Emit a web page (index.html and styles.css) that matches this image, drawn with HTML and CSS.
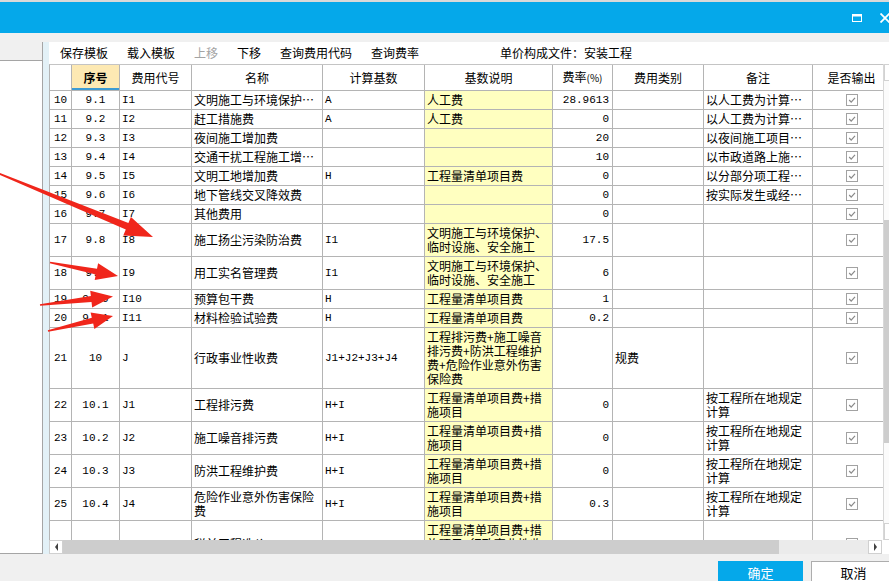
FILE: index.html
```html
<!DOCTYPE html>
<html lang="zh-CN">
<head>
<meta charset="utf-8">
<title>单价构成</title>
<link rel="stylesheet" href="styles.css">
</head>
<body>
<div class="topline"></div>
<div class="titlebar">
  <svg class="win-max" width="10" height="8" viewBox="0 0 10 8"><rect x="0.5" y="1" width="9" height="6.5" fill="none" stroke="#fff" stroke-width="1"/><rect x="0" y="0" width="10" height="2.5" fill="#fff"/></svg>
  <svg class="win-close" width="10" height="10" viewBox="0 0 10 10"><path d="M0.5 0.5 L9.5 9.5 M9.5 0.5 L0.5 9.5" stroke="#fff" stroke-width="1.8" fill="none"/></svg>
</div>
<div class="gap"></div>
<div class="main">
  <div class="leftpanel">
    <div class="lp-head"></div>
    <div class="lp-body"></div>
  </div>
  <div class="stripe"></div>
  <div class="content">
    <div class="toolbar">
      <span>保存模板</span>
      <span>载入模板</span>
      <span class="disabled">上移</span>
      <span>下移</span>
      <span>查询费用代码</span>
      <span>查询费率</span>
      <span class="file">单价构成文件：安装工程</span>
    </div>
    <div class="gridrow">
      <div class="gridclip">
        <table class="grid">
          <colgroup>
            <col class="w1"><col class="w2"><col class="w3"><col class="w4"><col class="w5"><col class="w6"><col class="w7"><col class="w8"><col class="w9"><col class="w10">
          </colgroup>
          <thead>
            <tr>
              <th></th>
              <th class="sorted">序号</th>
              <th>费用代号</th>
              <th>名称</th>
              <th>计算基数</th>
              <th>基数说明</th>
              <th>费率<span class="pct">(%)</span></th>
              <th>费用类别</th>
              <th>备注</th>
              <th>是否输出</th>
            </tr>
          </thead>
          <tbody>
            <tr><td class="mono num">10</td><td class="mono c">9.1</td><td class="mono">I1</td><td class="nw">文明施工与环境保护…</td><td class="mono">A</td><td class="yl">人工费</td><td class="mono r">28.9613</td><td></td><td class="nw">以人工费为计算…</td><td><span class="cb"><svg viewBox="0 0 10 10"><path d="M2.2 5 L4.2 7.2 L8 2.8"/></svg></span></td></tr>
            <tr><td class="mono num">11</td><td class="mono c">9.2</td><td class="mono">I2</td><td>赶工措施费</td><td class="mono">A</td><td class="yl">人工费</td><td class="mono r">0</td><td></td><td class="nw">以人工费为计算…</td><td><span class="cb"><svg viewBox="0 0 10 10"><path d="M2.2 5 L4.2 7.2 L8 2.8"/></svg></span></td></tr>
            <tr><td class="mono num">12</td><td class="mono c">9.3</td><td class="mono">I3</td><td>夜间施工增加费</td><td class="mono"></td><td class="yl"></td><td class="mono r">20</td><td></td><td class="nw">以夜间施工项目…</td><td><span class="cb"><svg viewBox="0 0 10 10"><path d="M2.2 5 L4.2 7.2 L8 2.8"/></svg></span></td></tr>
            <tr><td class="mono num">13</td><td class="mono c">9.4</td><td class="mono">I4</td><td class="nw">交通干扰工程施工增…</td><td class="mono"></td><td class="yl"></td><td class="mono r">10</td><td></td><td class="nw">以市政道路上施…</td><td><span class="cb"><svg viewBox="0 0 10 10"><path d="M2.2 5 L4.2 7.2 L8 2.8"/></svg></span></td></tr>
            <tr><td class="mono num">14</td><td class="mono c">9.5</td><td class="mono">I5</td><td>文明工地增加费</td><td class="mono">H</td><td class="yl">工程量清单项目费</td><td class="mono r">0</td><td></td><td class="nw">以分部分项工程…</td><td><span class="cb"><svg viewBox="0 0 10 10"><path d="M2.2 5 L4.2 7.2 L8 2.8"/></svg></span></td></tr>
            <tr><td class="mono num">15</td><td class="mono c">9.6</td><td class="mono">I6</td><td>地下管线交叉降效费</td><td class="mono"></td><td class="yl"></td><td class="mono r">0</td><td></td><td class="nw">按实际发生或经…</td><td><span class="cb"><svg viewBox="0 0 10 10"><path d="M2.2 5 L4.2 7.2 L8 2.8"/></svg></span></td></tr>
            <tr><td class="mono num">16</td><td class="mono c">9.7</td><td class="mono">I7</td><td>其他费用</td><td class="mono"></td><td class="yl"></td><td class="mono r">0</td><td></td><td></td><td><span class="cb"><svg viewBox="0 0 10 10"><path d="M2.2 5 L4.2 7.2 L8 2.8"/></svg></span></td></tr>
            <tr><td class="mono num">17</td><td class="mono c">9.8</td><td class="mono">I8</td><td>施工扬尘污染防治费</td><td class="mono">I1</td><td class="yl">文明施工与环境保护、临时设施、安全施工</td><td class="mono r">17.5</td><td></td><td></td><td><span class="cb"><svg viewBox="0 0 10 10"><path d="M2.2 5 L4.2 7.2 L8 2.8"/></svg></span></td></tr>
            <tr><td class="mono num">18</td><td class="mono c">9.9</td><td class="mono">I9</td><td>用工实名管理费</td><td class="mono">I1</td><td class="yl">文明施工与环境保护、临时设施、安全施工</td><td class="mono r">6</td><td></td><td></td><td><span class="cb"><svg viewBox="0 0 10 10"><path d="M2.2 5 L4.2 7.2 L8 2.8"/></svg></span></td></tr>
            <tr><td class="mono num">19</td><td class="mono c">9.10</td><td class="mono">I10</td><td>预算包干费</td><td class="mono">H</td><td class="yl">工程量清单项目费</td><td class="mono r">1</td><td></td><td></td><td><span class="cb"><svg viewBox="0 0 10 10"><path d="M2.2 5 L4.2 7.2 L8 2.8"/></svg></span></td></tr>
            <tr><td class="mono num">20</td><td class="mono c">9.11</td><td class="mono">I11</td><td>材料检验试验费</td><td class="mono">H</td><td class="yl">工程量清单项目费</td><td class="mono r">0.2</td><td></td><td></td><td><span class="cb"><svg viewBox="0 0 10 10"><path d="M2.2 5 L4.2 7.2 L8 2.8"/></svg></span></td></tr>
            <tr><td class="mono num">21</td><td class="mono c">10</td><td class="mono">J</td><td>行政事业性收费</td><td class="mono">J1+J2+J3+J4</td><td class="yl">工程排污费+施工噪音排污费+防洪工程维护费+危险作业意外伤害保险费</td><td class="mono r"></td><td>规费</td><td></td><td><span class="cb"><svg viewBox="0 0 10 10"><path d="M2.2 5 L4.2 7.2 L8 2.8"/></svg></span></td></tr>
            <tr><td class="mono num">22</td><td class="mono c">10.1</td><td class="mono">J1</td><td>工程排污费</td><td class="mono">H+I</td><td class="yl">工程量清单项目费+措施项目</td><td class="mono r">0</td><td></td><td>按工程所在地规定计算</td><td><span class="cb"><svg viewBox="0 0 10 10"><path d="M2.2 5 L4.2 7.2 L8 2.8"/></svg></span></td></tr>
            <tr><td class="mono num">23</td><td class="mono c">10.2</td><td class="mono">J2</td><td>施工噪音排污费</td><td class="mono">H+I</td><td class="yl">工程量清单项目费+措施项目</td><td class="mono r">0</td><td></td><td>按工程所在地规定计算</td><td><span class="cb"><svg viewBox="0 0 10 10"><path d="M2.2 5 L4.2 7.2 L8 2.8"/></svg></span></td></tr>
            <tr><td class="mono num">24</td><td class="mono c">10.3</td><td class="mono">J3</td><td>防洪工程维护费</td><td class="mono">H+I</td><td class="yl">工程量清单项目费+措施项目</td><td class="mono r">0</td><td></td><td>按工程所在地规定计算</td><td><span class="cb"><svg viewBox="0 0 10 10"><path d="M2.2 5 L4.2 7.2 L8 2.8"/></svg></span></td></tr>
            <tr><td class="mono num">25</td><td class="mono c">10.4</td><td class="mono">J4</td><td>危险作业意外伤害保险费</td><td class="mono">H+I</td><td class="yl">工程量清单项目费+措施项目</td><td class="mono r">0.3</td><td></td><td>按工程所在地规定计算</td><td><span class="cb"><svg viewBox="0 0 10 10"><path d="M2.2 5 L4.2 7.2 L8 2.8"/></svg></span></td></tr>
            <tr><td class="mono num">26</td><td class="mono c">11</td><td class="mono">K</td><td>税前工程造价</td><td class="mono">H+I+J</td><td class="yl">工程量清单项目费+措施项目+行政事业性收费</td><td class="mono r"></td><td></td><td></td><td><span class="cb"><svg viewBox="0 0 10 10"><path d="M2.2 5 L4.2 7.2 L8 2.8"/></svg></span></td></tr>
          </tbody>
        </table>
      </div>
      <div class="vscroll">
        <div class="vs-btn"><span class="tri-up"></span></div>
        <div class="vs-track"><div class="vs-thumb"></div></div>
        <div class="vs-btn"><span class="tri-down"></span></div>
      </div>
    </div>
    <div class="hscroll">
      <div class="hs-btn"><span class="tri-left"></span></div>
      <div class="hs-thumb"></div>
      <div class="hs-track"></div>
      <div class="hs-btn"><span class="tri-right"></span></div>
      <div class="hs-corner"></div>
    </div>
  </div>
</div>
<div class="footer">
  <div class="btn btn-primary">确定</div>
  <div class="btn btn-default">取消</div>
</div>
<svg class="annot" width="889" height="581" viewBox="0 0 889 581">
  <polygon points="0,173 128.4,223.1 130.9,217.1 153,237 123.3,235.5 125.8,229.5 0,175"/>
  <polygon points="50.2,261.7 97,268.7 98.1,263.3 118,276 94.7,279.9 95.8,274.5 49.8,263.3"/>
  <polygon points="39.9,304.2 90.9,296.1 90.2,290.7 113,296.5 92.2,307.5 91.5,302.1 40.1,305.8"/>
  <polygon points="47.8,330.2 91.8,317.8 90.6,312.4 113,316 94.4,329 93.2,323.6 48.2,331.8"/>
</svg>
</body>
</html>
```

FILE: styles.css
```css
* { box-sizing: border-box; }
html, body { margin: 0; padding: 0; }
body {
  width: 889px;
  height: 581px;
  overflow: hidden;
  position: relative;
  background: #f0f0f0;
  font-family: "Noto Sans CJK SC", "Noto Sans", sans-serif;
  font-size: 12px;
  color: #000;
}

.topline { height: 2px; background: #d9d9d9; }

.titlebar {
  height: 31px;
  background: #05a8ea;
  display: flex;
  justify-content: flex-end;
  align-items: flex-start;
  gap: 18px;
  padding-top: 11px;
}
.win-max { margin-top: 1px; }
.win-close { margin-right: -1px; }

.gap { height: 9px; }

.main { display: flex; height: 512px; }

.leftpanel {
  width: 43px;
  flex: none;
  display: flex;
  flex-direction: column;
  background: #fff;
  border-right: 1px solid #a5a5a5;
  border-bottom: 1px solid #a5a5a5;
}
.lp-head { height: 19px; background: #f0f0f0; border-bottom: 1px solid #a5a5a5; }
.lp-body { flex: 1; }

.stripe { width: 6px; flex: none; background: #e3f1f7; }

.content {
  width: 852px;
  flex: none;
  display: flex;
  flex-direction: column;
}

.toolbar {
  height: 22px;
  background: #fff;
  display: flex;
  align-items: center;
  gap: 19px;
  padding-left: 11px;
  line-height: 14px;
}
.toolbar .disabled { color: #a3a3a3; }
.toolbar .file { margin-left: 62px; }

.gridrow { display: flex; height: 476px; }
.gridclip { width: 834px; flex: none; overflow: hidden; background: #fff; }

.grid {
  border-collapse: separate;
  border-spacing: 0;
  table-layout: fixed;
  width: 842px;
  border-left: 1px solid #b4b4b4;
  border-top: 1px solid #c4c4c4;
}
.w1 { width: 22px; }
.w2 { width: 48px; }
.w3 { width: 72px; }
.w4 { width: 131px; }
.w5 { width: 102px; }
.w6 { width: 128px; }
.w7 { width: 60px; }
.w8 { width: 91px; }
.w9 { width: 109px; }
.w10 { width: 78px; }

.grid th, .grid td {
  border-right: 1px solid #b4b4b4;
  border-bottom: 1px solid #b4b4b4;
  padding: 2px 2px;
  line-height: 14px;
  vertical-align: middle;
  overflow: hidden;
  text-align: left;
  font-weight: normal;
}
.grid th {
  padding-top: 5px;
  padding-bottom: 5px;
  text-align: center;
  background: #fff;
  white-space: nowrap;
}
.grid th.sorted {
  background: #fde9b3;
  font-weight: bold;
  box-shadow: inset 0 -2px 0 #3d9bd3;
}
.pct { font-size: 10px; }

.grid td.mono { font-family: "Liberation Mono", monospace; font-size: 11px; }
.grid td.num { padding-left: 4px; }
.grid td.c { text-align: center; }
.grid td.r { text-align: right; padding-right: 3px; }
.grid td.nw { white-space: nowrap; }
.grid td.yl { background: #ffffc0; }

.cb {
  display: block;
  width: 12px;
  height: 12px;
  margin: 1px auto;
  border: 1px solid #a2a2a2;
  background: #fff;
}
.cb svg { display: block; width: 10px; height: 10px; }
.cb path { fill: none; stroke: #8a8a8a; stroke-width: 1.2; }

.vscroll {
  width: 17px;
  flex: none;
  display: flex;
  flex-direction: column;
  background: #fbfbfb;
  border-left: 1px solid #d8d8d8;
}
.vs-btn {
  height: 17px;
  display: flex;
  align-items: center;
  justify-content: center;
  background: #fff;
  border: 1px solid #d2d2d2;
}
.vs-track { flex: 1; }
.vs-thumb { margin-top: 139px; height: 223px; background: #cdcdcd; }

.tri-up { width: 0; height: 0; border-left: 3px solid transparent; border-right: 3px solid transparent; border-bottom: 4px solid #606060; }
.tri-down { width: 0; height: 0; border-left: 3px solid transparent; border-right: 3px solid transparent; border-top: 4px solid #606060; }
.tri-left { width: 0; height: 0; border-top: 4px solid transparent; border-bottom: 4px solid transparent; border-right: 3px solid #404040; }
.tri-right { width: 0; height: 0; border-top: 4px solid transparent; border-bottom: 4px solid transparent; border-left: 3px solid #404040; }

.hscroll { height: 14px; display: flex; background: #fff; }
.hs-btn {
  width: 14px;
  flex: none;
  display: flex;
  align-items: center;
  justify-content: center;
  background: #fff;
  border: 1px solid #d0d0d0;
}
.hs-thumb { width: 716px; flex: none; background: #cdcdcd; }
.hs-track { width: 89px; flex: none; background: #ebebeb; }
.hs-corner { flex: 1; background: #fff; }

.footer {
  height: 27px;
  display: flex;
  gap: 8px;
  padding: 7px 0 0 718px;
}
.btn {
  width: 85px;
  height: 24px;
  flex: none;
  font-size: 13px;
  line-height: 24px;
  text-align: center;
}
.btn-primary { background: #05a8ea; color: #fff; }
.btn-default { background: #fff; border: 1px solid #adadad; line-height: 22px; }

.annot {
  position: absolute;
  left: 0;
  top: 0;
  pointer-events: none;
}
.annot polygon { fill: #f0261b; }
```
